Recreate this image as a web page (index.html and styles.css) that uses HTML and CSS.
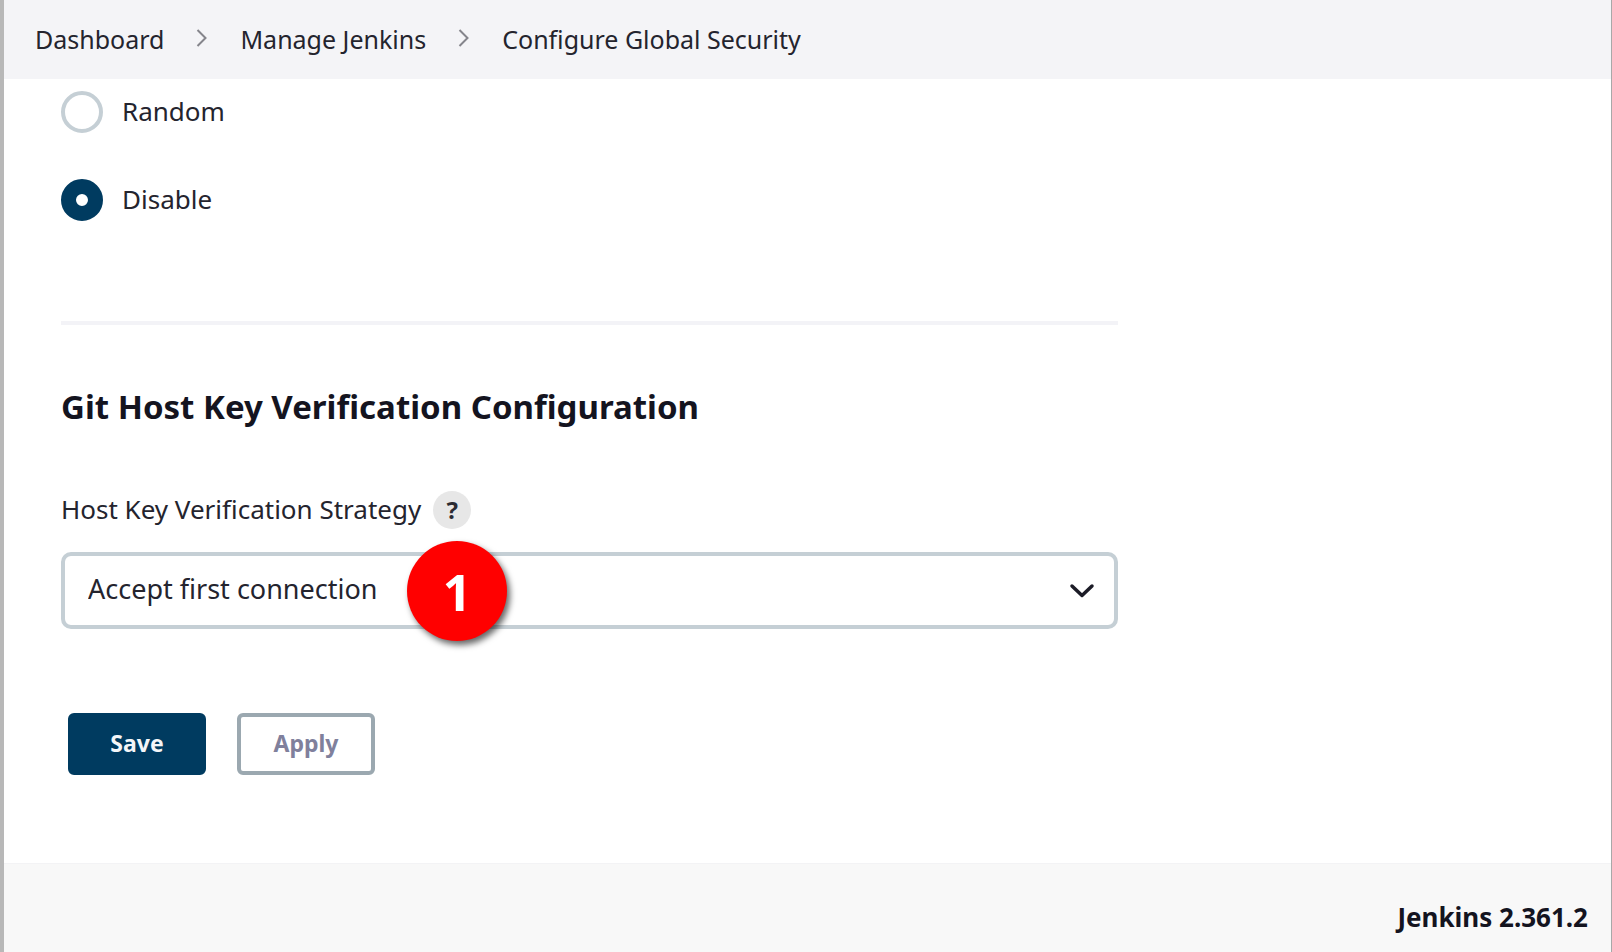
FILE: index.html
```html
<!DOCTYPE html>
<html lang="en">
<head>
<meta charset="utf-8">
<title>Configure Global Security</title>
<link rel="stylesheet" href="styles.css">
</head>
<body>
<header class="header">
  <nav class="breadcrumbs" aria-label="Breadcrumb">
    <a href="#">Dashboard</a>
    <svg class="separator" viewBox="0 0 12 20" aria-hidden="true"><path d="M1.500 2 L9.500 10 L1.500 18"/></svg>
    <a href="#">Manage Jenkins</a>
    <svg class="separator" viewBox="0 0 12 20" aria-hidden="true"><path d="M1.500 2 L9.500 10 L1.500 18"/></svg>
    <a href="#">Configure Global Security</a>
  </nav>
</header>
<main class="main">
  <form class="form">
    <div class="radios">
      <label class="radio"><input type="radio" name="port"><span>Random</span></label>
      <label class="radio"><input type="radio" name="port" checked><span>Disable</span></label>
    </div>
    <hr class="divider">
    <h2 class="heading">Git Host Key Verification Configuration</h2>
    <div class="field-label">
      <label for="strategy">Host Key Verification Strategy</label>
      <button class="help" type="button" aria-label="Help">?</button>
    </div>
    <div class="select-wrap">
      <select id="strategy" class="select"><option>Accept first connection</option></select>
      <svg class="chevron" viewBox="0 0 26 16" aria-hidden="true"><path d="M3 3 L13 12.500 L23 3"/></svg>
      <span class="badge">1</span>
    </div>
    <div class="actions">
      <button class="button primary" type="submit">Save</button>
      <button class="button" type="button">Apply</button>
    </div>
  </form>
</main>
<footer class="footer"><a href="#">Jenkins 2.361.2</a></footer>
</body>
</html>
```
FILE: styles.css
```css
* { box-sizing: border-box; }
body {
  margin: 0;
  min-height: 100vh;
  display: flex;
  flex-direction: column;
  border-left: 4px solid #b8b8b8;
  border-right: 1px solid #a8a8a8;
  background: #fff;
  color: #24242e;
  font: 26px/36px "Noto Sans", sans-serif;
}
a { color: inherit; text-decoration: none; }
.header { background: #f4f4f7; padding: 21px 31px 22px; }
.breadcrumbs { display: flex; align-items: center; gap: 32px; font-size: 25px; }
.separator {
  width: 12px;
  height: 20px;
  margin-bottom: 2px;
  fill: none;
  stroke: #85858c;
  stroke-width: 2;
}
.main { flex: 1; padding: 12px 57px 32px; }
.form { max-width: 1057px; }
.radios { display: flex; flex-direction: column; gap: 46px; }
.radio { display: flex; align-items: center; gap: 19px; }
.radio span { margin-top: -2px; }
.radio input {
  appearance: none;
  width: 42px;
  height: 42px;
  margin: 0;
  border: 4px solid #c5cfd5;
  border-radius: 50%;
}
.radio input:checked { border: 15px solid #003b60; }
.divider { height: 4px; margin: 100px 0 60px; border: 0; background: #f3f3f7; }
.heading { margin: 0; font-size: 33px; line-height: 44px; color: #14141f; }
.field-label { display: flex; align-items: center; gap: 12px; margin: 62px 0 23px; }
.field-label label { margin-top: -2px; }
.help {
  width: 38px;
  height: 38px;
  padding: 0;
  border: 0;
  border-radius: 50%;
  background: #e7e7e7;
  color: #2b2b33;
  font: bold 24px/38px "Noto Sans", sans-serif;
}
.select-wrap { position: relative; }
.select {
  appearance: none;
  display: block;
  width: 100%;
  height: 77px;
  padding: 0 80px 4px 23px;
  border: 4px solid #c5cfd5;
  border-radius: 10px;
  background: #fff;
  color: inherit;
  font: inherit;
  font-size: 27px;
}
.chevron {
  position: absolute;
  right: 23px;
  top: 31px;
  width: 26px;
  height: 16px;
  fill: none;
  stroke: #1c1c27;
  stroke-width: 3.5;
  stroke-linecap: round;
  stroke-linejoin: round;
  pointer-events: none;
}
.badge {
  position: absolute;
  left: 346px;
  top: -11px;
  width: 100px;
  height: 100px;
  border-radius: 50%;
  background: #f00;
  box-shadow: 3px 4px 6px rgba(0, 0, 0, .6);
  color: #fff;
  font-weight: bold;
  font-size: 50px;
  line-height: 102px;
  text-align: center;
}
.actions { display: flex; gap: 31px; padding: 84px 7px 0; }
.button {
  min-width: 138px;
  height: 62px;
  padding: 0 32px 3px;
  border: 4px solid #9ba8b0;
  border-radius: 6px;
  background: #fff;
  color: #80809c;
  font: bold 23px/32px "Noto Sans", sans-serif;
}
.button.primary { border-color: #003b60; background: #003b60; color: #f4f6f8; }
.footer {
  padding: 35px 23px 17px;
  border-top: 1px solid #f3f3f5;
  background: #f8f8f8;
  color: #14141f;
  font-weight: bold;
  text-align: right;
}
```
